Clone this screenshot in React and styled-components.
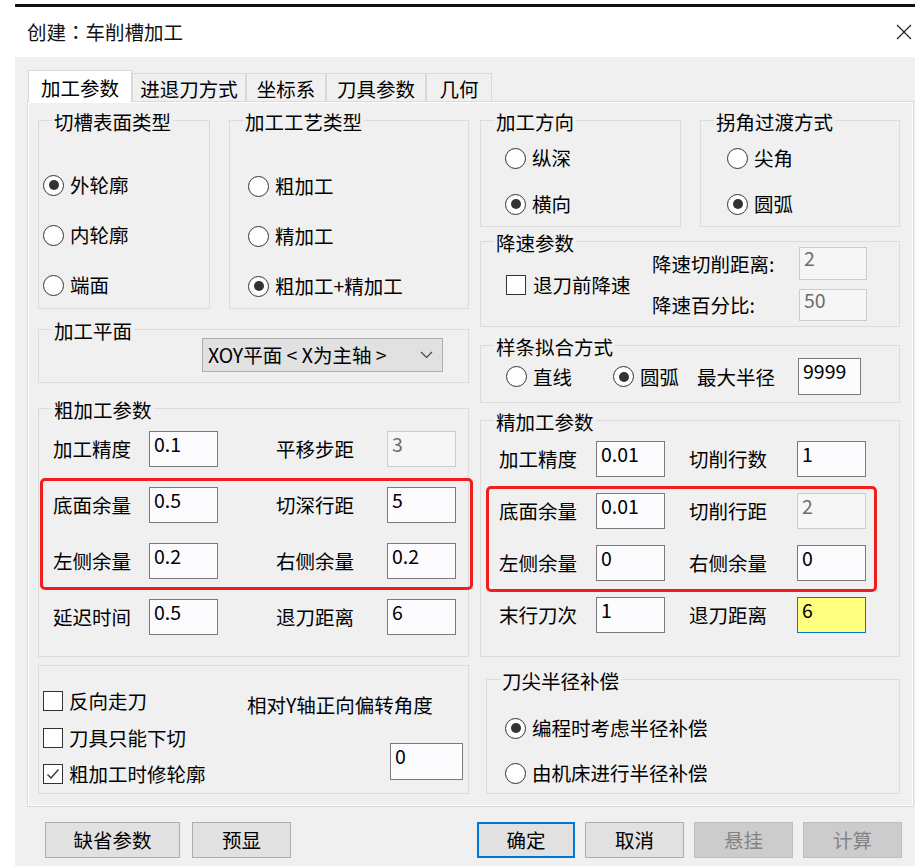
import React from "react"
import styled, { createGlobalStyle } from "styled-components"

const GlobalStyle = createGlobalStyle`
  html, body {
    margin: 0;
    padding: 0;
    background: #fff;
    overflow: hidden;
  }
  body {
    font-family: "Noto Sans CJK SC", "Noto Sans", sans-serif;
    font-size: 19.5px;
    color: #000;
  }
  * {
    box-sizing: border-box;
  }
`

const Window = styled.div`
  margin: 4px 0 0 15px;
  width: 900px;
  height: 862px;
  border-top: 3px solid #111;
  display: flex;
  flex-direction: column;
`

const TitleBar = styled.div`
  height: 50px;
  flex: none;
  background: #fff;
  display: flex;
  align-items: center;
  justify-content: space-between;
  padding: 0 3px 0 12px;
`

const Title = styled.span`
  line-height: 24px;
  color: #111;
`

// full-width colon centred, as in the Windows title font
const Colon = styled.span`
  font-family: "Noto Sans CJK TC", "Noto Sans CJK SC", sans-serif;
`

const CloseIcon = styled.svg`
  width: 16px;
  height: 16px;
`

const Body = styled.div`
  flex: 1;
  background: #f0f0f0;
  padding: 13px 0 0 12px;
`

const TabStrip = styled.div`
  height: 31px;
  display: flex;
  align-items: flex-end;
  padding-left: 1px;
`

const Tab = styled.div`
  position: relative;
  z-index: ${(p) => (p.$active ? 1 : 0)};
  width: ${(p) => p.$w}px;
  height: ${(p) => (p.$active ? 32 : 28)}px;
  margin-bottom: ${(p) => (p.$active ? -1 : 0)}px;
  padding-top: ${(p) => (p.$active ? 3 : 2)}px;
  display: flex;
  align-items: center;
  justify-content: center;
  background: ${(p) => (p.$active ? "#fff" : "#f0f0f0")};
  border: 1px solid #d9d9d9;
  border-bottom: none;
  line-height: 24px;
  white-space: nowrap;
`

const Panel = styled.div`
  width: 887px;
  height: 706px;
  border: 1px solid #d9d9d9;
  background: #f0f0f0;
  box-shadow: inset 1px 1px 0 #fff, inset -1px -1px 0 #fff;
  padding: 18px 0 0 10px;
  display: grid;
  grid-template-columns: 431px 420px;
  column-gap: 11px;
  align-content: start;
`

const Column = styled.div`
  display: flex;
  flex-direction: column;
  align-items: flex-start;
`

const GroupRow = styled.div`
  display: flex;
  gap: 19px;
`

const Group = styled.div`
  position: relative;
  width: ${(p) => p.$w}px;
  height: ${(p) => p.$h}px;
  margin-top: ${(p) => p.$mt || 0}px;
  margin-left: ${(p) => p.$ml || 0}px;
  border: 1px solid #dcdcdc;
`

const Legend = styled.span`
  position: absolute;
  top: -11px;
  left: 13px;
  padding: 0 2px;
  background: #f0f0f0;
  line-height: 24px;
  white-space: nowrap;
`

const Highlight = styled.div`
  position: absolute;
  left: ${(p) => p.$x}px;
  top: ${(p) => p.$y}px;
  width: ${(p) => p.$w}px;
  height: ${(p) => p.$h}px;
  border: 3px solid #f31d1d;
  border-radius: 5px;
  pointer-events: none;
`

const ChoiceList = styled.div`
  display: flex;
  flex-direction: column;
  gap: ${(p) => p.$gap}px;
  padding: ${(p) => p.$pt}px 0 0 ${(p) => p.$pl}px;
`

const Choice = styled.label`
  display: flex;
  align-items: center;
  gap: ${(p) => p.$gap || 6}px;
  height: 24px;
  line-height: 24px;
  white-space: nowrap;
`

const Dot = styled.span`
  flex: none;
  width: 21px;
  height: 21px;
  border-radius: 50%;
  border: 1px solid #333;
  background: #fff;
  display: flex;
  align-items: center;
  justify-content: center;

  &::after {
    content: "";
    display: ${(p) => (p.$on ? "block" : "none")};
    width: 10px;
    height: 10px;
    border-radius: 50%;
    background: #333;
  }
`

const Box = styled.span`
  flex: none;
  width: 20px;
  height: 20px;
  border: 1px solid #333;
  background: #fff;
  display: flex;
  align-items: center;
  justify-content: center;
`

const FieldGrid = styled.div`
  display: grid;
  grid-template-columns: ${(p) => p.$cols};
  grid-auto-rows: ${(p) => p.$row || 36}px;
  row-gap: ${(p) => p.$gap}px;
  align-items: center;
  padding: ${(p) => p.$pt}px 0 0 ${(p) => p.$pl}px;
`

const Label = styled.span`
  padding-left: ${(p) => p.$ind || 0}px;
  line-height: 24px;
  white-space: nowrap;
`

const EditBox = styled.input`
  width: ${(p) => p.$w}px;
  height: ${(p) => p.$h}px;
  padding: 0 3px 12px 4px;
  margin: 0;
  font: inherit;
  font-size: 19.5px;
  outline: none;
  border: 1px solid
    ${(p) => (p.$hl ? "#0078d7" : p.$dis ? "#cccccc" : "#7a7a7a")};
  background: ${(p) => (p.$hl ? "#ffff80" : p.$dis ? "#f6f6f6" : "#fcfcfe")};
  color: ${(p) => (p.$dis ? "#6d6d6d" : "#000")};
`

const SpeedGrid = styled.div`
  display: grid;
  grid-template-columns: 146px 147px 68px;
  grid-template-rows: 33px 32px;
  row-gap: 9px;
  align-items: center;
  padding: 5px 0 0 25px;
`

const SpeedCheck = styled.div`
  grid-row: 1 / span 2;
  align-self: center;
  padding-top: 2px;
`

const SplineRow = styled.div`
  display: grid;
  grid-template-columns: 107px 84px 101px 63px;
  align-items: center;
  height: 37px;
  margin: 12px 0 0 25px;
`

const PlaneBody = styled.div`
  padding: 8px 0 0 163px;
`

const Select = styled.div`
  width: 241px;
  height: 34px;
  border: 1px solid #adadad;
  background: #e1e1e1;
  display: flex;
  align-items: center;
  justify-content: space-between;
  padding: 0 9px 0 5px;
  white-space: nowrap;
  line-height: 24px;
`

const Chevron = styled.svg`
  width: 13px;
  height: 8px;
`

const OptionsBody = styled.div`
  display: grid;
  grid-template-columns: 208px 1fr;
`

const AngleCol = styled.div`
  display: flex;
  flex-direction: column;
  align-items: flex-end;
  padding: 27px 5px 0 0;
`

const AngleText = styled.span`
  align-self: flex-start;
  line-height: 24px;
  white-space: nowrap;
`

const AngleEdit = styled.div`
  margin-top: 24px;
`

const Footer = styled.div`
  display: flex;
  align-items: center;
  margin-top: 15px;
  padding-left: 18px;
`

const Button = styled.button`
  width: ${(p) => p.$w}px;
  height: 36px;
  margin: 0 0 0 ${(p) => p.$ml || 0}px;
  padding: 0;
  font: inherit;
  font-size: 19.5px;
  line-height: 24px;
  background: ${(p) => (p.disabled ? "#cccccc" : "#e1e1e1")};
  border: ${(p) =>
    p.$primary
      ? "2px solid #0078d7"
      : p.disabled
      ? "1px solid #bfbfbf"
      : "1px solid #adadad"};
  color: ${(p) => (p.disabled ? "#838383" : "#000")};
`

const Radio = ({ on, children }) => (
  <Choice>
    <Dot $on={on} />
    {children}
  </Choice>
)

const Check = ({ on, gap, children }) => (
  <Choice $gap={gap}>
    <Box>
      {on && (
        <svg width="16" height="16" viewBox="0 0 16 16">
          <path d="M2.5 8.5 L6 12 L13.5 3.5" fill="none" stroke="#333" strokeWidth="1.3" />
        </svg>
      )}
    </Box>
    {children}
  </Choice>
)

const Edit = ({ value, w = 69, h = 36, dis, hl }) => (
  <EditBox readOnly value={value} $w={w} $h={h} $dis={dis} $hl={hl} />
)

const roughRows = [
  ["加工精度", "0.1", "平移步距", "3", true],
  ["底面余量", "0.5", "切深行距", "5"],
  ["左侧余量", "0.2", "右侧余量", "0.2"],
  ["延迟时间", "0.5", "退刀距离", "6"],
]

const finishRows = [
  ["加工精度", "0.01", "切削行数", "1"],
  ["底面余量", "0.01", "切削行距", "2", true],
  ["左侧余量", "0", "右侧余量", "0"],
  ["末行刀次", "1", "退刀距离", "6", false, true],
]

export default function App() {
  return (
    <>
      <GlobalStyle />
      <Window>
        <TitleBar>
          <Title>
            创建<Colon>：</Colon>车削槽加工
          </Title>
          <CloseIcon viewBox="0 0 16 16">
            <path d="M1 1 L15 15 M15 1 L1 15" stroke="#222" strokeWidth="1.2" />
          </CloseIcon>
        </TitleBar>
        <Body>
          <TabStrip>
            <Tab $w={104} $active>加工参数</Tab>
            <Tab $w={114}>进退刀方式</Tab>
            <Tab $w={80}>坐标系</Tab>
            <Tab $w={100}>刀具参数</Tab>
            <Tab $w={66}>几何</Tab>
          </TabStrip>
          <Panel>
            <Column>
              <GroupRow>
                <Group $w={172} $h={189}>
                  <Legend>切槽表面类型</Legend>
                  <ChoiceList $pt={52} $pl={4} $gap={26}>
                    <Radio on>外轮廓</Radio>
                    <Radio>内轮廓</Radio>
                    <Radio>端面</Radio>
                  </ChoiceList>
                </Group>
                <Group $w={240} $h={189}>
                  <Legend>加工工艺类型</Legend>
                  <ChoiceList $pt={53} $pl={18} $gap={26}>
                    <Radio>粗加工</Radio>
                    <Radio>精加工</Radio>
                    <Radio on>粗加工+精加工</Radio>
                  </ChoiceList>
                </Group>
              </GroupRow>

              <Group $w={431} $h={54} $mt={20}>
                <Legend>加工平面</Legend>
                <PlaneBody>
                  <Select>
                    <span>XOY平面 &lt; X为主轴 &gt;</span>
                    <Chevron viewBox="0 0 13 8">
                      <path d="M1 1 L6.5 6.5 L12 1" fill="none" stroke="#444" strokeWidth="1.2" />
                    </Chevron>
                  </Select>
                </PlaneBody>
              </Group>

              <Group $w={431} $h={249} $mt={25}>
                <Legend>粗加工参数</Legend>
                <FieldGrid $cols="96px 69px 169px 69px" $gap={20} $pt={22} $pl={14}>
                  {roughRows.map(([a, av, b, bv, bdis]) => (
                    <React.Fragment key={a}>
                      <Label>{a}</Label>
                      <Edit value={av} />
                      <Label $ind={58}>{b}</Label>
                      <Edit value={bv} dis={bdis} />
                    </React.Fragment>
                  ))}
                </FieldGrid>
                <Highlight $x={1} $y={69} $w={433} $h={112} />
              </Group>

              <Group $w={431} $h={129} $mt={8}>
                <OptionsBody>
                  <ChoiceList $pt={23} $pl={4} $gap={12.5}>
                    <Check>反向走刀</Check>
                    <Check>刀具只能下切</Check>
                    <Check on>粗加工时修轮廓</Check>
                  </ChoiceList>
                  <AngleCol>
                    <AngleText>相对Y轴正向偏转角度</AngleText>
                    <AngleEdit>
                      <Edit value="0" w={73} h={37} />
                    </AngleEdit>
                  </AngleCol>
                </OptionsBody>
              </Group>
            </Column>

            <Column>
              <GroupRow>
                <Group $w={201} $h={107}>
                  <Legend>加工方向</Legend>
                  <ChoiceList $pt={25} $pl={24} $gap={22}>
                    <Radio>纵深</Radio>
                    <Radio on>横向</Radio>
                  </ChoiceList>
                </Group>
                <Group $w={200} $h={107}>
                  <Legend>拐角过渡方式</Legend>
                  <ChoiceList $pt={25} $pl={26} $gap={22}>
                    <Radio>尖角</Radio>
                    <Radio on>圆弧</Radio>
                  </ChoiceList>
                </Group>
              </GroupRow>

              <Group $w={420} $h={86} $mt={14}>
                <Legend>降速参数</Legend>
                <SpeedGrid>
                  <SpeedCheck>
                    <Check gap={7}>退刀前降速</Check>
                  </SpeedCheck>
                  <Label>降速切削距离:</Label>
                  <Edit value="2" w={68} h={33} dis />
                  <Label>降速百分比:</Label>
                  <Edit value="50" w={68} h={32} dis />
                </SpeedGrid>
              </Group>

              <Group $w={420} $h={58} $mt={18}>
                <Legend>样条拟合方式</Legend>
                <SplineRow>
                  <Radio>直线</Radio>
                  <Radio on>圆弧</Radio>
                  <Label>最大半径</Label>
                  <Edit value="9999" w={63} h={37} />
                </SplineRow>
              </Group>

              <Group $w={420} $h={237} $mt={17}>
                <Legend>精加工参数</Legend>
                <FieldGrid $cols="97px 69px 132px 69px" $gap={16} $pt={20} $pl={18}>
                  {finishRows.map(([a, av, b, bv, bdis, bhl]) => (
                    <React.Fragment key={a}>
                      <Label>{a}</Label>
                      <Edit value={av} />
                      <Label $ind={24}>{b}</Label>
                      <Edit value={bv} dis={bdis} hl={bhl} />
                    </React.Fragment>
                  ))}
                </FieldGrid>
                <Highlight $x={5} $y={65} $w={391} $h={106} />
              </Group>

              <Group $w={414} $h={115} $mt={22} $ml={6}>
                <Legend>刀尖半径补偿</Legend>
                <ChoiceList $pt={36} $pl={18} $gap={21}>
                  <Radio on>编程时考虑半径补偿</Radio>
                  <Radio>由机床进行半径补偿</Radio>
                </ChoiceList>
              </Group>
            </Column>
          </Panel>

          <Footer>
            <Button $w={135}>缺省参数</Button>
            <Button $w={99} $ml={12}>预显</Button>
            <Button $w={98} $ml={186} $primary>确定</Button>
            <Button $w={99} $ml={10}>取消</Button>
            <Button $w={99} $ml={10} disabled>悬挂</Button>
            <Button $w={99} $ml={10} disabled>计算</Button>
          </Footer>
        </Body>
      </Window>
    </>
  )
}
